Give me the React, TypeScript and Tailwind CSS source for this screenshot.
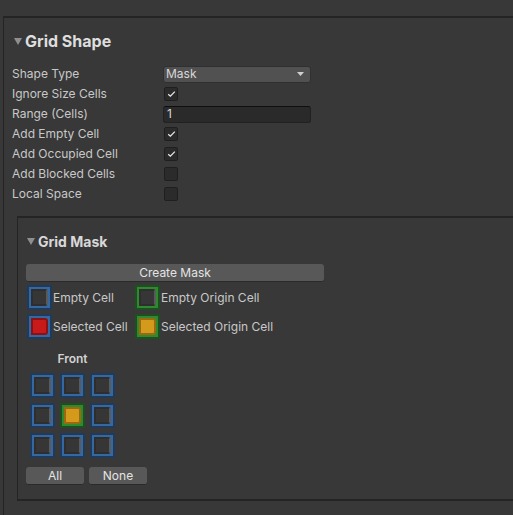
// Unity-style inspector: Grid Shape component with a nested Grid Mask editor.

type CellKind = 'empty' | 'emptyOrigin' | 'selected' | 'selectedOrigin';

const LABEL = 'text-[12px] text-[#c8c8c8]';

export default function App() {
  return (
    <div
      className="h-[515px] w-[513px] overflow-hidden bg-[#383838] pt-[16px] pl-[3px]"
      style={{ fontFamily: 'Inter, "Noto Sans", sans-serif' }}
    >
      <div className="h-[520px] border-t-2 border-l border-[#242424] bg-[#383838] pt-[13px] pl-[8px]">
        <Foldout title="Grid Shape" big />

        <div className="mt-[13px] flex flex-col">
          <Row label="Shape Type">
            <Dropdown value="Mask" />
          </Row>
          <Row label="Ignore Size Cells">
            <Checkbox checked />
          </Row>
          <Row label="Range (Cells)">
            <TextField value="1" />
          </Row>
          <Row label="Add Empty Cell">
            <Checkbox checked />
          </Row>
          <Row label="Add Occupied Cell">
            <Checkbox checked />
          </Row>
          <Row label="Add Blocked Cells">
            <Checkbox />
          </Row>
          <Row label="Local Space">
            <Checkbox />
          </Row>
        </div>

        <GridMask />
      </div>
    </div>
  );
}

function GridMask() {
  const grid: CellKind[][] = [
    ['empty', 'empty', 'empty'],
    ['empty', 'selectedOrigin', 'empty'],
    ['empty', 'empty', 'empty'],
  ];

  return (
    <div className="mt-[12px] ml-[5px] border-t-2 border-b-2 border-l border-[#242424] pt-[14px] pb-[14px] pl-[8px]">
      <div className="pl-[1px]">
        <Foldout title="Grid Mask" />
      </div>

      <button
        type="button"
        className="mt-[14px] flex h-[18px] w-[298px] items-center justify-center rounded-[3px] border-b border-[#2a2a2a] bg-[#585858] text-[12px] text-[#e4e4e4]"
      >
        Create Mask
      </button>

      <div className="mt-[3px] ml-[1px] flex flex-col gap-[4px]">
        <div className="flex items-center">
          <Legend kind="empty" label="Empty Cell" />
          <Legend kind="emptyOrigin" label="Empty Origin Cell" />
        </div>
        <div className="flex items-center">
          <Legend kind="selected" label="Selected Cell" />
          <Legend kind="selectedOrigin" label="Selected Origin Cell" />
        </div>
      </div>

      <div className="mt-[13px] ml-[4px] w-[85px] text-center text-[12px] font-semibold leading-[14px] text-[#d2d2d2]">
        Front
      </div>

      <div className="mt-[7px] ml-[4px] grid w-[85px] grid-cols-3 gap-[5px]">
        {grid.flat().map((k, i) => (
          <Cell key={i} kind={k} />
        ))}
      </div>

      <div className="mt-[9px] flex gap-[5px]">
        <SmallButton label="All" />
        <SmallButton label="None" />
      </div>
    </div>
  );
}

function Foldout({ title, big }: { title: string; big?: boolean }) {
  return (
    <div className={`flex items-center ${big ? 'h-[20px] gap-[3px] pl-[2px]' : 'h-[18px] gap-[3px]'}`}>
      <svg width="8" height="7" viewBox="0 0 8 7" className="mt-[1px]">
        <path d="M0 0 H8 L4 7 Z" fill="#8f8f8f" />
      </svg>
      <span
        className={
          big
            ? 'text-[16px] font-bold text-[#dedede]'
            : 'text-[14px] font-bold text-[#d8d8d8]'
        }
      >
        {title}
      </span>
    </div>
  );
}

function Row({ label, children }: { label: string; children: React.ReactNode }) {
  return (
    <div className="flex h-[20px] items-center">
      <span className={`w-[151px] ${LABEL}`}>{label}</span>
      {children}
    </div>
  );
}

function Dropdown({ value }: { value: string }) {
  return (
    <div className="flex h-[17px] w-[148px] items-center justify-between rounded-[3px] border border-[#303030] bg-[#515151] pr-[6px] pl-[2px] text-[12px] text-[#d8d8d8]">
      <span>{value}</span>
      <svg width="7" height="4" viewBox="0 0 7 4">
        <path d="M0 0 H7 L3.5 4 Z" fill="#d0d0d0" />
      </svg>
    </div>
  );
}

function TextField({ value }: { value: string }) {
  return (
    <div className="flex h-[17px] w-[148px] items-center rounded-[3px] border border-[#212121] border-t-[#0f0f0f] bg-[#2a2a2a] pl-[3px] text-[12px] text-[#d8d8d8]">
      {value}
    </div>
  );
}

function Checkbox({ checked }: { checked?: boolean }) {
  return (
    <div className="ml-[1px] flex h-[14px] w-[14px] items-center justify-center rounded-[2px] border border-[#1f1f1f] bg-[#2b2b2b]">
      {checked && (
        <svg width="9" height="8" viewBox="0 0 9 8">
          <path d="M1.2 4.2 L3.4 6.2 L7.8 1.6" fill="none" stroke="#e6e6e6" strokeWidth="1.3" />
        </svg>
      )}
    </div>
  );
}

function Legend({ kind, label }: { kind: CellKind; label: string }) {
  return (
    <div className="flex w-[108px] items-center gap-[1px]">
      <Cell kind={kind} />
      <span className={`whitespace-nowrap ${LABEL}`}>{label}</span>
    </div>
  );
}

function Cell({ kind }: { kind: CellKind }) {
  const origin = kind === 'emptyOrigin' || kind === 'selectedOrigin';
  const frame = origin
    ? 'border-[#1d4f20] bg-[#2f8a2f]'
    : 'border-[#1f3a5a] bg-[#3567a0]';

  let inner = 'border-[#2e2e2e] border-r-[#5a5a5a] bg-[#363636]';
  if (kind === 'selected') inner = 'border-[#8a1212] bg-[#c81a1a]';
  if (kind === 'selectedOrigin') inner = 'border-[#9a6a12] bg-[#d39a1c]';

  return (
    <div className={`h-[25px] w-[25px] shrink-0 border-2 p-[2px] ${frame}`}>
      <div className={`h-full w-full rounded-r-[3px] border-2 ${inner}`} />
    </div>
  );
}

function SmallButton({ label }: { label: string }) {
  return (
    <button
      type="button"
      className="flex h-[18px] w-[58px] items-center justify-center rounded-[3px] border-b border-[#2a2a2a] bg-[#585858] text-[12px] text-[#e4e4e4]"
    >
      {label}
    </button>
  );
}
